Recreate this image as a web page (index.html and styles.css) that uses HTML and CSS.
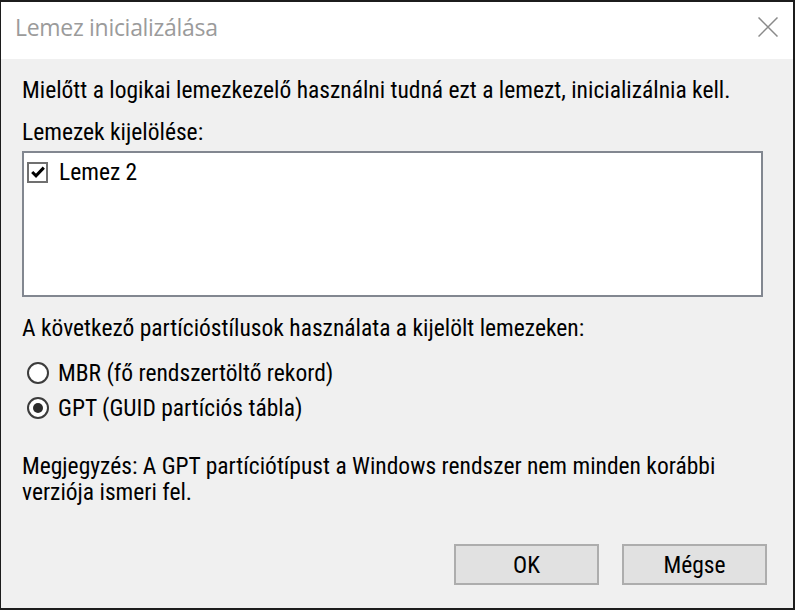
FILE: index.html
```html
<!DOCTYPE html>
<html lang="hu">
<head>
<meta charset="utf-8">
<title>Lemez inicializálása</title>
<link rel="stylesheet" href="styles.css">
</head>
<body>
<div class="dialog">
  <div class="titlebar">
    <span class="title">Lemez inicializálása</span>
    <svg class="close" width="20" height="20" viewBox="0 0 20 20" aria-hidden="true">
      <path d="M0.5 0.5 L19.5 19.5 M19.5 0.5 L0.5 19.5" stroke="#8a8a8a" stroke-width="1.5" fill="none"/>
    </svg>
  </div>
  <div class="content">
    <p class="intro">Mielőtt a logikai lemezkezelő használni tudná ezt a lemezt, inicializálnia kell.</p>
    <p class="label">Lemezek kijelölése:</p>
    <div class="listbox">
      <div class="item">
        <span class="checkbox">
          <svg width="16" height="16" viewBox="0 0 16 16" aria-hidden="true">
            <path d="M2.2 8 L6 11.8 L13.8 3.6" stroke="#000" stroke-width="3" fill="none"/>
          </svg>
        </span>
        <span>Lemez 2</span>
      </div>
    </div>
    <p class="label2">A következő partícióstílusok használata a kijelölt lemezeken:</p>
    <div class="radio"><span class="circle"></span><span>MBR (fő rendszertöltő rekord)</span></div>
    <div class="radio radio-second"><span class="circle checked"></span><span>GPT (GUID partíciós tábla)</span></div>
    <p class="note">Megjegyzés: A GPT partíciótípust a Windows rendszer nem minden korábbi<br>verziója ismeri fel.</p>
    <div class="buttons">
      <button class="btn">OK</button>
      <button class="btn">Mégse</button>
    </div>
  </div>
</div>
</body>
</html>
```
FILE: styles.css
```css
html, body {
  margin: 0;
  padding: 0;
  background: #f0f0f0;
}

.dialog {
  width: 795px;
  height: 610px;
  box-sizing: border-box;
  border-style: solid;
  border-color: #1c1c1c;
  border-width: 2px 2px 2px 1px;
  display: flex;
  flex-direction: column;
  background: #f0f0f0;
}

.titlebar {
  height: 57px;
  flex: none;
  box-sizing: border-box;
  background: #ffffff;
  display: flex;
  justify-content: space-between;
  align-items: flex-start;
  padding: 13px 15px 0 14px;
}

.title {
  font-family: "Open Sans", sans-serif;
  font-size: 23px;
  letter-spacing: -0.3px;
  line-height: 24px;
  color: #9b9b9b;
}

.close {
  margin-top: 2px;
  display: block;
}

.content {
  flex: 1;
  padding: 18px 26px 0 21px;
  font-family: "Roboto Condensed", "Liberation Sans", sans-serif;
  font-size: 23.5px;
  line-height: 26px;
  color: #000;
}

.content p {
  margin: 0;
}

.label {
  margin-top: 16px !important;
}

.listbox {
  margin-top: 6px;
  margin-right: 4px;
  height: 146px;
  box-sizing: border-box;
  border: 2px solid #828790;
  background: #ffffff;
  padding: 6px 0 0 3px;
}

.item {
  display: flex;
  align-items: center;
  gap: 11px;
}

.checkbox {
  width: 21px;
  height: 21px;
  box-sizing: border-box;
  border: 2px solid #707070;
  background: #fff;
  display: flex;
  align-items: center;
  justify-content: center;
}

.checkbox svg {
  display: block;
}

.label2 {
  margin-top: 18px !important;
}

.radio {
  display: flex;
  align-items: center;
  gap: 9px;
  margin-top: 19px;
  padding-left: 5px;
}

.radio-second {
  margin-top: 9px;
}

.circle {
  width: 22px;
  height: 22px;
  box-sizing: border-box;
  border: 2px solid #3c3c3c;
  border-radius: 50%;
  background: #fff;
  display: flex;
  align-items: center;
  justify-content: center;
}

.circle.checked::after {
  content: "";
  width: 10px;
  height: 10px;
  border-radius: 50%;
  background: #2b2b2b;
}

.note {
  margin-top: 32px !important;
  line-height: 26px;
}

.buttons {
  display: flex;
  justify-content: flex-end;
  gap: 23px;
  margin-top: 39px;
}

.btn {
  width: 145px;
  height: 41px;
  box-sizing: border-box;
  border: 2px solid #adadad;
  background: #e1e1e1;
  font-family: "Roboto Condensed", "Liberation Sans", sans-serif;
  font-size: 23.5px;
  color: #000;
  padding: 0;
  border-radius: 0;
}
```
